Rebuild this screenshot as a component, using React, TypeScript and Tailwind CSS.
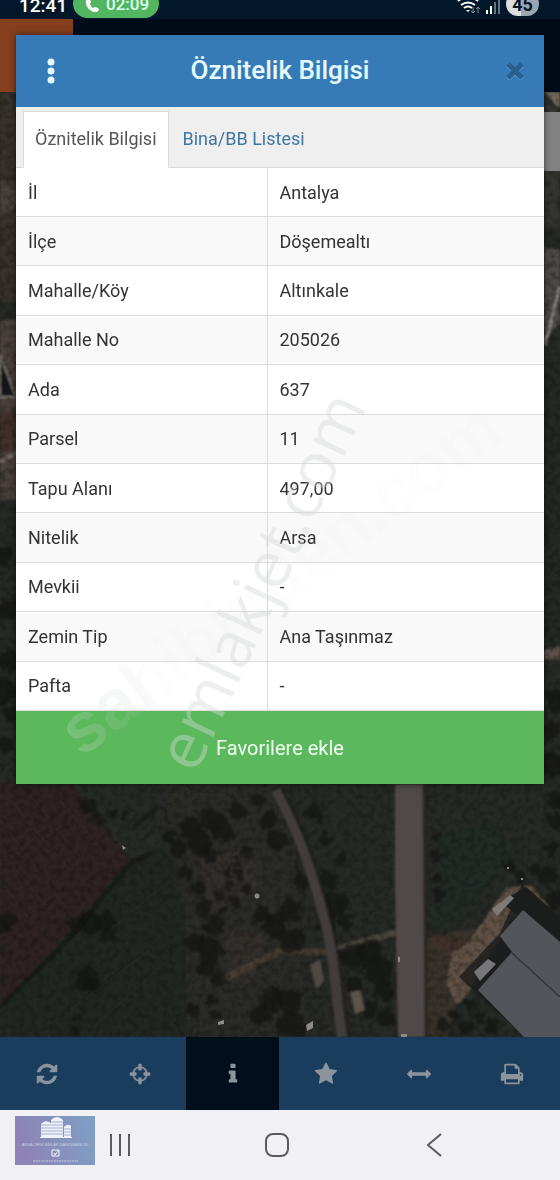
import { useState } from 'react';

const rows: [string, string][] = [
  ['İl', 'Antalya'],
  ['İlçe', 'Döşemealtı'],
  ['Mahalle/Köy', 'Altınkale'],
  ['Mahalle No', '205026'],
  ['Ada', '637'],
  ['Parsel', '11'],
  ['Tapu Alanı', '497,00'],
  ['Nitelik', 'Arsa'],
  ['Mevkii', '-'],
  ['Zemin Tip', 'Ana Taşınmaz'],
  ['Pafta', '-'],
];

const tools = [
  {
    label: 'Yenile',
    d: 'M1639 1056q0 5-1 7-64 268-268 434.5t-478 166.5q-146 0-282.5-55t-243.5-157l-129 129q-19 19-45 19t-45-19-19-45v-448q0-26 19-45t45-19h448q26 0 45 19t19 45-19 45l-137 137q71 66 161 102t187 36q134 0 250-65t186-179q11-17 53-117 8-23 30-23h192q13 0 22.5 9.5t9.5 22.5zm25-800v448q0 26-19 45t-45 19h-448q-26 0-45-19t-19-45 19-45l138-138q-148-137-349-137-134 0-250 65t-186 179q-11 17-53 117-8 23-30 23h-199q-13 0-22.5-9.5t-9.5-22.5v-7q65-268 270-434.5t480-166.5q146 0 284 55.5t245 156.5l130-129q19-19 45-19t45 19 19 45z',
  },
  {
    label: 'Konum',
    d: 'M1325 1024h-109q-26 0-45-19t-19-45v-128q0-26 19-45t45-19h109q-32-108-112.5-188.5t-188.5-112.5v109q0 26-19 45t-45 19h-128q-26 0-45-19t-19-45v-109q-108 32-188.5 112.5t-112.5 188.5h109q26 0 45 19t19 45v128q0 26-19 45t-45 19h-109q32 108 112.5 188.5t188.5 112.5v-109q0-26 19-45t45-19h128q26 0 45 19t19 45v109q108-32 188.5-112.5t112.5-188.5zm339-192v128q0 26-19 45t-45 19h-143q-37 161-154.5 278.5t-278.5 154.5v143q0 26-19 45t-45 19h-128q-26 0-45-19t-19-45v-143q-161-37-278.5-154.5t-154.5-278.5h-143q-26 0-45-19t-19-45v-128q0-26 19-45t45-19h143q37-161 154.5-278.5t278.5-154.5v-143q0-26 19-45t45-19h128q26 0 45 19t19 45v143q161 37 278.5 154.5t154.5 278.5h143q26 0 45 19t19 45z',
  },
  {
    label: 'Bilgi',
    d: 'M1216 1344v128q0 26-19 45t-45 19h-512q-26 0-45-19t-19-45v-128q0-26 19-45t45-19h64v-384h-64q-26 0-45-19t-19-45v-128q0-26 19-45t45-19h384q26 0 45 19t19 45v576h64q26 0 45 19t19 45zm-128-1152v192q0 26-19 45t-45 19h-256q-26 0-45-19t-19-45v-192q0-26 19-45t45-19h256q26 0 45 19t19 45z',
  },
  {
    label: 'Favoriler',
    d: 'M1728 647q0 22-26 48l-363 354 86 500q1 7 1 20 0 21-10.5 35.5t-30.5 14.5q-19 0-40-12l-449-236-449 236q-22 12-40 12-21 0-31.5-14.5t-10.5-35.5q0-6 2-20l86-500-364-354q-25-27-25-48 0-37 56-46l502-73 225-455q19-41 49-41t49 41l225 455 502 73q56 9 56 46z',
  },
  {
    label: 'Ölçüm',
    d: 'M1792 896q0 26-19 45l-256 256q-19 19-45 19t-45-19-19-45v-128h-1024v128q0 26-19 45t-45 19-45-19l-256-256q-19-19-19-45t19-45l256-256q19-19 45-19t45 19 19 45v128h1024v-128q0-26 19-45t45-19 45 19l256 256q19 19 19 45z',
  },
  {
    label: 'Yazdır',
    d: 'M448 1536h896v-256h-896v256zm0-640h896v-384h-160q-40 0-68-28t-28-68v-160h-640v640zm1152 64q0-26-19-45t-45-19-45 19-19 45 19 45 45 19 45-19 19-45zm128 0v416q0 13-9.5 22.5t-22.5 9.5h-224v160q0 40-28 68t-68 28h-960q-40 0-68-28t-28-68v-160h-224q-13 0-22.5-9.5t-9.5-22.5v-416q0-79 56.5-135.5t135.5-56.5h64v-544q0-40 28-68t68-28h672q40 0 88 20t76 48l152 152q28 28 48 76t20 88v256h64q79 0 135.5 56.5t56.5 135.5z',
  },
];

const trees: [number, number, number][] = [
  [88, 805, 8], [97, 815, 5], [112, 815, 3], [125, 815, 3], [102, 823, 4], [7, 920, 9], [2, 928, 8],
  [76, 927, 8], [90, 922, 11], [105, 920, 10], [108, 934, 7], [86, 978, 11], [93, 984, 8],
  [78, 1019, 5], [74, 1030, 5], [170, 835, 7], [178, 848, 9], [190, 828, 11], [200, 843, 12],
  [213, 820, 12], [224, 833, 10], [208, 855, 8], [185, 873, 7], [237, 812, 8], [199, 888, 7],
  [204, 908, 9], [213, 925, 10], [195, 943, 9], [210, 950, 13], [205, 968, 9], [218, 980, 8],
  [247, 852, 7], [236, 862, 5], [227, 872, 5], [240, 876, 5], [230, 886, 5], [245, 888, 6],
  [219, 896, 5], [234, 902, 5], [223, 911, 4], [258, 799, 7], [268, 820, 9], [276, 840, 10],
  [262, 915, 9], [274, 925, 12], [290, 910, 11], [302, 880, 8], [292, 940, 13], [212, 998, 5],
  [193, 1010, 7], [215, 1015, 5], [272, 1000, 11], [260, 1015, 10], [288, 1000, 13], [292, 1025, 14],
  [328, 880, 10], [335, 905, 13], [325, 925, 8], [345, 920, 8], [315, 812, 8], [325, 840, 8],
  [340, 860, 7], [352, 955, 13], [370, 950, 12], [378, 970, 14], [385, 990, 11], [353, 985, 8],
  [370, 1010, 9], [388, 1018, 9], [437, 835, 4], [437, 855, 5], [437, 880, 5], [440, 895, 5],
  [455, 1015, 6], [466, 1028, 7], [444, 1026, 6], [480, 1015, 6], [492, 1028, 7], [470, 1005, 5],
  [510, 866, 6], [520, 877, 6], [535, 870, 5], [548, 875, 9], [554, 900, 10], [556, 800, 9],
  [555, 820, 8], [550, 850, 7], [556, 700, 11], [552, 730, 9], [553, 765, 12], [6, 610, 11],
  [9, 660, 10], [5, 690, 12], [11, 715, 8], [5, 745, 8], [4, 555, 10],
];

function MapBackdrop() {
  return (
    <svg
      className="absolute inset-0 h-full w-full"
      viewBox="0 92 560 945"
      preserveAspectRatio="xMidYMid slice"
      aria-hidden="true"
    >
      <defs>
        <filter id="grain" x="0" y="0" width="100%" height="100%" colorInterpolationFilters="sRGB">
          <feTurbulence type="fractalNoise" baseFrequency="0.16" numOctaves="3" seed="8" />
          <feColorMatrix values="0 0 0 0 0.04  0 0 0 0 0.045  0 0 0 0 0.04  3 0 0 0 -1.2" />
        </filter>
        <filter id="soft">
          <feGaussianBlur stdDeviation="1.3" />
        </filter>
        <filter id="crown" x="-5%" y="-5%" width="110%" height="110%" colorInterpolationFilters="sRGB">
          <feTurbulence type="fractalNoise" baseFrequency="0.12" numOctaves="2" seed="3" result="noise" />
          <feDisplacementMap in="SourceGraphic" in2="noise" scale="14" xChannelSelector="R" yChannelSelector="G" />
          <feGaussianBlur stdDeviation="1.2" />
        </filter>
      </defs>
      <rect y="92" width="560" height="945" fill="#272926" />
      <g filter="url(#soft)">
        <path d="M0 92h20v210H0z" fill="#37312c" />
        <path d="M0 180l16 10v18L0 215zM0 320h20v180H0z" fill="#4a403a" />
        <path d="M0 355l16 42H0z" fill="#15151a" stroke="#7a756c" strokeWidth="2" />
        <path d="M0 415l16-7v40l-16 6z" fill="#41302c" />
        <path d="M0 462l18-10" stroke="#746a60" strokeWidth="4" />
        <path d="M544 92h16v18z" fill="#6f665b" />
        <path d="M544 100l16 7v120h-16z" fill="#363530" />
        <path d="M544 345l16-62v-20l-16 10z" fill="#777570" />
        <path d="M560 250l-16-3v90l16-12z" fill="#4d4b47" />
        <path d="M545 345l15-58" stroke="#898580" strokeWidth="3" />
        <path d="M544 360h16v280h-16z" fill="#222a24" />
        <path d="M544 650l16-4v14h-16z" fill="#5b5046" />
        <path d="M0 784h72l58 75-64 78L0 1007z" fill="#2e2421" />
        <path d="M130 859l-64 78L0 1007v30h186l2-115-24-78z" fill="#202722" />
        <path d="M72 784l58 75 34-15V784z" fill="#262b27" />
        <path d="M164 784h126l18 253H186V920z" fill="#292927" />
        <path d="M200 858l56-10 2 38-50 34z" fill="#332e29" />
        <path d="M225 930l45 5-20 50-24-3z" fill="#302f2a" />
        <path d="M300 784h96l4 150-70 18z" fill="#272b26" />
        <path d="M430 784h130v130l-35-40-70 60-22-6z" fill="#262b25" />
        <path d="M435 840l60-20 20 40-60 60-20 10z" fill="#232c26" />
        <path d="M222 980l58-29 48 1" stroke="#483d31" strokeWidth="6" fill="none" />
        <path d="M328 952l72-21" stroke="#48443a" strokeWidth="6" fill="none" />
        <path d="M425 938l50-10-28 109h-22z" fill="#38302c" />
        <path d="M452 947l17-6 37-53 25-3 18 22-35 10-25 40-22 38-10 10-10-20z" fill="#5e5145" />
        <path d="M432 936l40 3-14 12-24-2z" fill="#40302a" />
      </g>
      <rect y="92" width="560" height="945" filter="url(#grain)" opacity="0.28" />
      <g filter="url(#crown)">
        {trees.map(([x, y, r], i) => (
          <circle key={i} cx={x} cy={y} r={r} fill="#121413" opacity="0.7" />
        ))}
      </g>
      <g filter="url(#soft)" fill="none">
        <path d="M276 790C300 835 308 860 322 910S334 985 342 1037" stroke="#423e3b" strokeWidth="10" />
        <path d="M282 790C305 835 314 860 328 910S340 985 349 1037" stroke="#1f1f1e" strokeWidth="2" />
        <path d="M395 784h28l3 253h-28l-3-150z" fill="#504a47" />
        <path d="M424 784l2 253" stroke="#292624" strokeWidth="3" />
        <path d="M310 965l10-6 4 22-8 8z" fill="#4f4a43" />
        <path d="M350 992l10-2 5 20-10 4z" fill="#5b534a" />
        <path d="M0 1007l66-65 64-78 20-10M134 827l24-20" stroke="#111512" strokeWidth="2" />
        <path
          d="M10 800l60 70M30 795l60 75M0 820l60 80M0 850l45 55M0 880l30 40M60 800l50 60"
          stroke="#5b4a42"
          opacity="0.3"
        />
        <path d="M70 1010l80-60M90 1030l95-85M110 930l60-50" stroke="#38423a" opacity="0.4" />
      </g>
      <path d="M526 887l34 30v30l-60-45z" fill="#1f1e1d" />
      <path d="M500 933l22-49 38 36v117h-35l-66-60z" fill="#1a1b1d" opacity="0.8" />
      <path d="M523 910l37 32v95h-36l-46-47 34-38-12-16z" fill="#54555b" />
      <path d="M511 952l49 45" stroke="#33343a" strokeWidth="1.5" />
      <path d="M492 909l18-14 4 3-17 18z" fill="#7e7a78" />
      <path d="M474 972l14-13 8 5-16 17z" fill="#77767a" />
      <g fill="#8f8c86">
        <circle cx="257" cy="896" r="2.5" />
        <path d="M122 845l4 3-3 2zM218 1022l6-2v4l-6 1zM398 957h2v5h-2zM401 1034h6v3h-6zM306 1025l7-4v7l-6 3zM507 867h2v2h-2zM521 878h2v2h-2z" />
      </g>
    </svg>
  );
}

function StatusBar() {
  return (
    <div className="flex h-[19px] items-end overflow-hidden bg-[#02172a] pl-[19px] pr-[21px] text-white">
      <span className="w-[54px] text-[19px] font-medium leading-[27px]">12:41</span>
      <span className="mb-px flex h-[29px] items-end gap-[7px] rounded-full bg-[#52b560] pl-[12px] pr-[10px]">
        <svg className="mb-[6px]" width="14" height="14" viewBox="0 0 14 14" fill="currentColor" aria-hidden="true">
          <path d="M3 0L1 2q-1 6 4 10 4 3 7 2l2-2q0-1-1-2l-3-1-2 1q-2-1-3-4l1-2-1-3Q4 0 3 0z" />
        </svg>
        <span className="text-[17px] font-medium leading-[27px] text-[#dffff0]">02:09</span>
      </span>
      <svg className="ml-auto mb-[4px]" width="45" height="18" viewBox="457 -3 45 18" fill="none" aria-hidden="true">
        <g stroke="#fff" strokeWidth="2">
          <path d="M458 1q10-8 20 0M461 5q7-5 14 0M464 8q4-3 8 0" />
        </g>
        <path d="M466 10l2 2 2-2z" fill="#fff" />
        <path d="M473 7v6m-2-2l2 2 2-2M478 13V7m-2 2l2-2 2 2" stroke="#7d8994" />
        <path d="M486 10h2v4h-2zM490 6h2v8h-2z" fill="#fff" />
        <path d="M494 2h2v12h-2zM498-2h2v16h-2z" fill="#65727f" />
      </svg>
      <span className="mb-[3px] ml-1 flex h-[24px] w-[33px] items-end justify-center rounded-full bg-linear-to-r from-[#d9dee3] from-45% to-[#9ba6b0] to-45% text-[18px] font-bold leading-[22px] text-[#03131f]">
        45
      </span>
    </div>
  );
}

function Watermarks() {
  return (
    <svg
      className="pointer-events-none absolute inset-0 h-full w-full"
      viewBox="16 35 529 749"
      preserveAspectRatio="none"
      aria-hidden="true"
    >
      <defs>
        <linearGradient id="fade">
          <stop offset="0" stopColor="#c8dccc" stopOpacity="0.26" />
          <stop offset="0.12" stopColor="#b8ccbc" stopOpacity="0.14" />
          <stop offset="0.2" stopColor="#999999" stopOpacity="0.02" />
          <stop offset="1" stopColor="#999999" stopOpacity="0.02" />
        </linearGradient>
      </defs>
      <text transform="translate(82 758) rotate(-37)" className="font-['Liberation_Sans'] text-[70px] font-bold" fill="url(#fade)">
        sahibinden.com
      </text>
      <text
        transform="translate(196 775) rotate(-65)"
        className="font-['Open_Sans'] text-[65px]"
        fill="#d4d8d6"
        fillOpacity="0.42"
      >
        emlakjet.com
      </text>
    </svg>
  );
}

function LogoMark() {
  return (
    <svg className="absolute left-[15px] top-[6px]" width="80" height="49" viewBox="0 0 80 49" aria-hidden="true">
      <defs>
        <linearGradient id="logo" x1="0" x2="1" y1="0.2" y2="0">
          <stop offset="0" stopColor="#8d83b5" />
          <stop offset="1" stopColor="#7fa0c6" />
        </linearGradient>
      </defs>
      <rect width="80" height="49" fill="url(#logo)" />
      <g fill="#eef2fa">
        <path d="M26 8q4-5 10-1v14H26zM36 4q6-6 12 0v17H36zM49 11q4-4 7-1v11h-7zM25 21h32v1H25z" />
      </g>
      <path d="M25 9h11M25 12h11M25 15h11M25 18h11M36 6h12M36 9h12M36 12h12M36 15h12M36 18h12M49 13h7M49 16h7M49 19h7" stroke="#8794bd" strokeWidth="0.7" />
      <text x="40" y="30" textAnchor="middle" fill="#c9cfe6" className="font-['Liberation_Sans'] text-[4px]">
        ARSA OFİSİ EMLAK DANIŞMANLIĞI
      </text>
      <path d="M37 34h7v6h-7zM39 37l1 2 4-5" fill="none" stroke="#f2f5fb" />
      <path d="M18 45h45" stroke="#c6cee4" strokeDasharray="2 0.6" />
    </svg>
  );
}

export default function App() {
  const [tab, setTab] = useState(0);
  const tabs = ['Öznitelik Bilgisi', 'Bina/BB Listesi'];

  return (
    <div className="relative flex min-h-screen flex-col overflow-hidden bg-[#020c18] font-[Roboto,'Noto_Sans',sans-serif]">
      <header>
        <StatusBar />
        <div className="h-[73px] bg-[#020c18]">
          <div className="h-full w-[73px] bg-[#863f1c]" />
        </div>
      </header>

      <main className="relative flex-1">
        <MapBackdrop />
        <div className="absolute right-0 top-[20px] h-[59px] w-[16px] bg-[#818181]" />
      </main>

      <nav aria-label="Harita araçları" className="grid h-[73px] grid-cols-6 bg-[#1b3d5d] pr-0.5">
        {tools.map((tool, i) => (
          <button
            key={tool.label}
            type="button"
            aria-label={tool.label}
            className={i === 2 ? 'flex items-center justify-center bg-[#010f1c]' : 'flex items-center justify-center'}
          >
            <svg width="24" height="24" viewBox="0 0 1792 1792" fill="#8b939d" aria-hidden="true">
              <path d={tool.d} />
            </svg>
          </button>
        ))}
      </nav>

      <footer className="relative grid h-[70px] grid-cols-3 bg-[#f1f1f4] pl-[42px] pr-[48px] text-[#5b5b5f]">
        <LogoMark />
        <button type="button" aria-label="Son uygulamalar" className="flex items-center justify-center">
          <svg width="24" height="24" viewBox="0 0 24 24" fill="none" stroke="currentColor" strokeWidth="2">
            <path d="M3 1v22M12 1v22M21 1v22" />
          </svg>
        </button>
        <button type="button" aria-label="Ana ekran" className="flex items-center justify-center">
          <svg width="24" height="24" viewBox="0 0 24 24" fill="none" stroke="currentColor" strokeWidth="2">
            <rect x="1" y="1" width="22" height="22" rx="7" />
          </svg>
        </button>
        <button type="button" aria-label="Geri" className="flex items-center justify-center">
          <svg width="24" height="24" viewBox="0 0 24 24" fill="none" stroke="currentColor" strokeWidth="2">
            <path d="M19 1L6 12l13 11" />
          </svg>
        </button>
      </footer>

      <section
        role="dialog"
        aria-labelledby="dialog-title"
        className="absolute inset-x-4 top-[35px] bg-white shadow-[0_0_6px_rgba(0,0,0,0.6)]"
      >
        <div className="flex h-[72px] items-center justify-between bg-[#367ab7] px-[19px] text-[#e6fbff]">
          <button type="button" aria-label="Menü" className="flex w-8 justify-center">
            <svg width="8" height="26" viewBox="0 0 8 26" fill="currentColor" aria-hidden="true">
              <circle cx="4" cy="4" r="3.5" />
              <circle cx="4" cy="13" r="3.5" />
              <circle cx="4" cy="22" r="3.5" />
            </svg>
          </button>
          <h1 id="dialog-title" className="pb-0.5 text-[26px] font-medium">
            Öznitelik Bilgisi
          </h1>
          <button type="button" aria-label="Kapat" className="flex w-8 justify-end">
            <svg width="20" height="20" viewBox="0 0 20 20" fill="none" strokeWidth="5" aria-hidden="true">
              <path d="M3 4l14 14M17 4L3 18" stroke="#5f9ac9" />
              <path d="M3 3l14 14M17 3L3 17" stroke="#285f8d" />
            </svg>
          </button>
        </div>

        <div role="tablist" className="flex h-[61px] border-b border-[#d9d9d9] bg-[#efefef] px-[7px] pt-1">
          {tabs.map((name, i) => (
            <button
              key={name}
              type="button"
              role="tab"
              aria-selected={tab === i}
              onClick={() => setTab(i)}
              className={
                tab === i
                  ? '-mb-px border border-b-0 border-[#dddddd] bg-white px-[11px] pb-1 text-[18px] text-[#555555]'
                  : 'border border-b-0 border-transparent px-[13px] pb-[3px] text-[18px] text-[#3f77a3]'
              }
            >
              {name}
            </button>
          ))}
        </div>

        <table className="h-[543px] w-full table-fixed border-collapse text-[18px] text-[#333333]">
          <colgroup>
            <col className="w-[251px]" />
            <col />
          </colgroup>
          <tbody>
            {rows.map(([key, value]) => (
              <tr key={key} className="border-b border-[#dddddd] even:bg-[#f9f9f9]">
                <th scope="row" className="border-r border-[#dddddd] px-3 text-left font-normal">
                  {key}
                </th>
                <td className="px-3">{value}</td>
              </tr>
            ))}
          </tbody>
        </table>

        <button type="button" className="h-[73px] w-full bg-[#5cb85c] text-[20px] text-[#effff2]">
          Favorilere ekle
        </button>
        <Watermarks />
      </section>
    </div>
  );
}
